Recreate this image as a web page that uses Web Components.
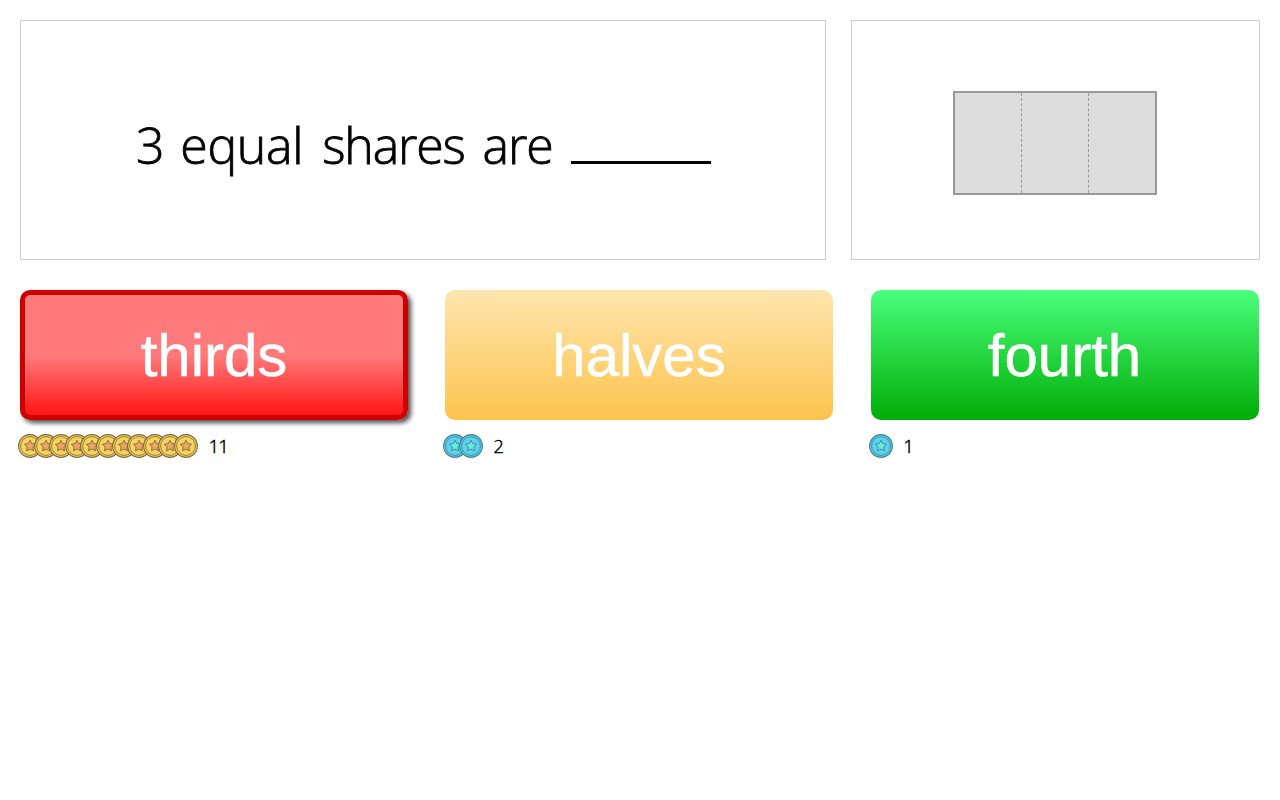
<!DOCTYPE html>
<html lang="en">
<head>
<meta charset="utf-8">
<title>Equal shares</title>
<style>body{margin:0;background:#fff;color:#000;font-family:"Open Sans","Noto Sans",sans-serif}</style>
</head>
<body>
<quiz-page></quiz-page>
<script>
const define = (name, render) => customElements.define(name, class extends HTMLElement {
  constructor() { super(); this.attachShadow({ mode: 'open' }); }
  connectedCallback() { this.shadowRoot.innerHTML = render(this); }
});

define('question-text', () => `
<style>
:host{display:flex;box-sizing:border-box;width:806px;height:240px;border:1px solid #ccc;padding:90px 0 0 115px;font-size:50px;font-weight:300;line-height:68px;white-space:pre;-webkit-text-stroke:.8px #000}
p{margin:0;letter-spacing:.4px;word-spacing:5px}
i{display:inline-block;width:140px;height:3px;background:#000}
.digit{margin-right:-3px}
.equal{letter-spacing:-.35px;margin-right:.75px}
.shares{letter-spacing:-1.2px;margin-right:-.4px}
.are{letter-spacing:-1.1px;margin-right:-.5px}
</style><p><span class="digit">3</span> <span class="equal">equal</span> <span class="shares">shares</span> <span class="are">are</span> <i></i></p>`);

define('share-figure', () => `
<style>
:host{display:flex;box-sizing:border-box;width:409px;height:240px;border:1px solid #ccc;justify-content:center;padding-top:70px}
svg{display:block;width:204px;height:104px;margin-right:1px}
</style>
<svg viewBox="0 0 204 104"><rect x="1" y="1" width="202" height="102" fill="#ddd" stroke="#999" stroke-width="2"/>
<path d="M68.5 2V102M135.5 2V102" stroke="#999" stroke-dasharray="3 2.1"/></svg>`);

define('answer-button', () => `
<style>
:host{display:block;width:388px;height:130px}
button{display:block;box-sizing:border-box;width:388px;height:130px;margin:0;padding:0;border:0;border-radius:10px;color:#fff;font:60px/130px "Liberation Sans",Arial,sans-serif;-webkit-text-stroke:.5px #fff;text-align:center;padding-top:1px;background:linear-gradient(#ffe5af,#fcc44c)}
:host([tone=red]) button{border:5px solid #c00;line-height:120px;background:linear-gradient(#ff7b7b 50%,#ff1515);box-shadow:3px 3px 5px rgba(0,0,0,.7)}
:host([tone=green]) button{padding-right:1px;background:linear-gradient(#4aff7d,#00ad05)}
</style><button><slot></slot></button>`);

define('coin-score', host => {
  const count = Number(host.getAttribute('count'));
  const gold = host.hasAttribute('gold');
  const [face, star, line] = gold ? ['#f4d65c', '#eda465', '#866742'] : ['#5dd0f3', '#67edd9', '#3d8588'];
  const coin = `<svg viewBox="0 0 24 24"><circle cx="12" cy="12" r="11.35" fill="${face}" stroke="${line}" stroke-width="1.15"/><circle cx="12" cy="12" r="9.4" fill="none" stroke="${line}" stroke-width=".85"/><path d="M12 6.2L13.8 9.6 17.6 10.2 14.9 13 15.5 16.8 12 15.1 8.5 16.8 9.1 13 6.4 10.2 10.2 9.6z" fill="${star}" stroke="${line}" stroke-width=".9" stroke-linejoin="round"/></svg>`;
  return `<style>
:host{display:flex;align-items:center;height:24px;margin:14px 0 0 -2px;font-size:18px;line-height:24px}
svg{display:block;width:24px;height:24px;flex:none}
svg+svg{margin-left:-8.4px}
:host([count="2"]) svg+svg{margin-left:-8px}
span{margin-left:10.6px;font-weight:300;-webkit-text-stroke:.5px #000;letter-spacing:-.4px}
</style>${coin.repeat(count)}<span>${count}</span>`;
});

define('answer-choice', host => `
<style>:host{display:block;width:388px}</style>
<answer-button tone="${host.getAttribute('tone')}"><slot></slot></answer-button>
<coin-score count="${host.getAttribute('count')}" ${host.hasAttribute('gold') ? 'gold' : ''}></coin-score>`);

define('quiz-page', () => `
<style>
:host{display:block;padding:20px}
section{display:flex;justify-content:space-between}
section+section{display:grid;grid-template-columns:425px 426px 388px;justify-content:start;margin-top:30px}
</style>
<section><question-text></question-text><share-figure></share-figure></section>
<section>
<answer-choice tone="red" count="11" gold>thirds</answer-choice>
<answer-choice tone="yellow" count="2">halves</answer-choice>
<answer-choice tone="green" count="1">fourth</answer-choice>
</section>`);
</script>
</body>
</html>
